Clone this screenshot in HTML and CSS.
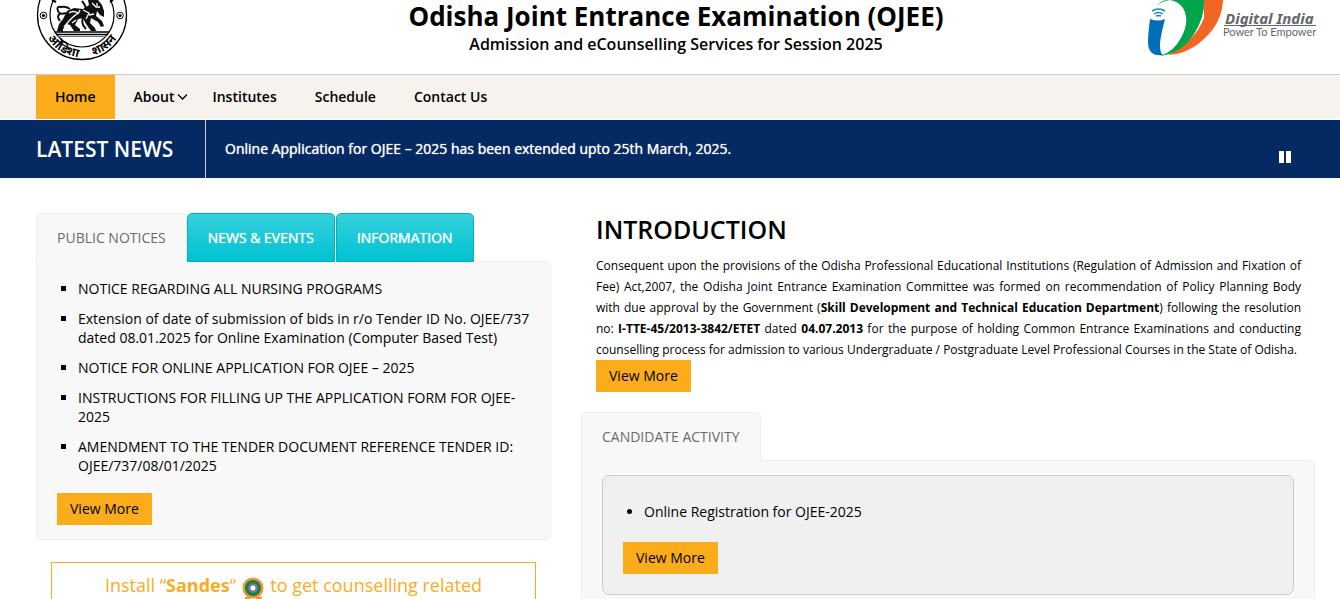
FILE: index.html
```html
<!DOCTYPE html>
<html lang="en">
<head>
<meta charset="utf-8">
<title>Odisha Joint Entrance Examination (OJEE)</title>
<link rel="stylesheet" href="styles.css">
</head>
<body>
<header class="masthead">
  <svg class="emblem" viewBox="0 0 92 62" role="img" aria-label="Government of Odisha emblem">
    <circle cx="46" cy="15" r="44.5" fill="#fff" stroke="#000" stroke-width="1.3"/>
    <circle cx="46" cy="15" r="32" fill="#fff" stroke="#000" stroke-width="1.2"/>
    <g fill="none" stroke="#000"><circle cx="7.500" cy="15.500" r="3.300"/><circle cx="84" cy="15.500" r="3.300"/></g>
    <circle cx="7.500" cy="15.500" r="1.600"/><circle cx="84" cy="15.500" r="1.600"/>
    <path d="M19 32h54M20 34.500h52" stroke="#000" stroke-width="1.500"/>
    <path d="M22 36.500h48" stroke="#777"/>
    <path d="M21 31L23 24L27 19L31 11L38 8L47 9L53 5L52 0H62L66 5L68 11L68 17L64 15L61 11L60 16L66 21L68 26L65 27L62 22L55 18L54 23L59 28L60 31H55L50 24L47 18L42 19L39 25L44 29V31H38L34 25L31 24L27 29V32Z" fill="#111"/>
    <path d="M30 13Q23 15 22 11Q20 6 25 7Q30 6 34 9M24 14Q20 16 24 21M46 1Q52 8 49 14Q43 22 50 29" fill="none" stroke="#111" stroke-width="2"/>
    <path d="M33 13Q37 10 42 13L37 17L33 21L28 27M47 10L53 13L50 19M56 3L60 7L64 7M53 15L58 14M44 10L42 14M61 3v3M40 20L36 23" fill="none" stroke="#fff" stroke-width="1.300"/>
    <path d="M16 0l4 2M74 2l3-2" stroke="#000" stroke-width="2"/>
    <path id="seal-arc" d="M4 15A42 42 0 0 0 88 15" fill="none"/>
    <text class="seal-text"><textPath href="#seal-arc" startOffset="50%" text-anchor="middle">ओडिशा &#160;&#160;&#160; शासन</textPath></text>
  </svg>
  <div class="site-title">
    <h1>Odisha Joint Entrance Examination (OJEE)</h1>
    <p>Admission and eCounselling Services for Session 2025</p>
  </div>
  <svg class="digital-india" viewBox="0 0 168 62" role="img" aria-label="Digital India, Power To Empower">
    <path d="M56 0H75Q74 22 57 38Q45 50 29 54L20 55Q47 41 56 18Z" fill="#f26522"/>
    <path d="M8 6Q13 1 18 0H56Q57 17 46 34Q34 53 12 56Q27 51 34 36Q42 20 35 8Q30 1 22 0Q14 1 8 6Z" fill="#00a44b"/>
    <path d="M2 19Q10 22 17 19Q12 38 12 45Q12 53 15 55Q0 57 0 42Q0 34 2 19Z" fill="#006fba"/>
    <g fill="none" stroke="#1684c7" stroke-width="1.500"><path d="M4 11Q10.500 7 17 11M6 14Q10.500 11 15 14"/><path d="M8 16Q10.500 15 13 16"/></g>
    <text class="di-name" x="77" y="24">Digital India</text>
    <path d="M76 25.500h92" stroke="#63676b"/>
    <text class="di-tag" x="75" y="36">Power To Empower</text>
  </svg>
</header>

<nav class="main-nav" aria-label="Main">
  <a class="current" href="#home">Home</a>
  <a class="has-menu" href="#about">About<svg viewBox="0 0 13 10" aria-hidden="true"><path d="M4 2.500L8.500 7L13 2.500" fill="none" stroke="#000" stroke-width="1.300"/></svg></a>
  <a href="#institutes">Institutes</a>
  <a href="#schedule">Schedule</a>
  <a href="#contact">Contact Us</a>
</nav>

<section class="news-bar">
  <h2>LATEST NEWS</h2>
  <p>Online Application for OJEE – 2025 has been extended upto 25th March, 2025.</p>
  <button type="button" aria-label="Pause"><svg viewBox="0 0 12 12" aria-hidden="true"><path d="M0 0h5v12H0zM7 0h5v12H7z" fill="#fff"/></svg></button>
</section>

<main class="columns">
  <div class="left">
    <div class="tabs" role="tablist">
      <button type="button" class="tab active" role="tab" aria-selected="true">PUBLIC NOTICES</button>
      <button type="button" class="tab" role="tab" aria-selected="false">NEWS &amp; EVENTS</button>
      <button type="button" class="tab" role="tab" aria-selected="false">INFORMATION</button>
    </div>
    <section class="panel notices">
      <ul>
        <li><a href="#n1">NOTICE REGARDING ALL NURSING PROGRAMS</a></li>
        <li><a href="#n2">Extension of date of submission of bids in r/o Tender ID No. OJEE/737 dated 08.01.2025 for Online Examination (Computer Based Test)</a></li>
        <li><a href="#n3">NOTICE FOR ONLINE APPLICATION FOR OJEE – 2025</a></li>
        <li><a href="#n4">INSTRUCTIONS FOR FILLING UP THE APPLICATION FORM FOR OJEE-2025</a></li>
        <li><a href="#n5">AMENDMENT TO THE TENDER DOCUMENT REFERENCE TENDER ID: OJEE/737/08/01/2025</a></li>
      </ul>
      <a class="more" href="#notices">View More</a>
    </section>
    <aside class="sandes">
      <p>Install “<b>Sandes</b>“
        <svg viewBox="0 0 22 24" aria-hidden="true"><circle cx="11" cy="11" r="10.500" fill="#f0953c"/><path d="M14 19l6 1l-1 4h-5zM8 20l-5 0v4h5z" fill="#f0953c"/><circle cx="11" cy="11" r="8" fill="#17813f"/><circle cx="11" cy="11" r="4.800" fill="#7d77ab"/><circle cx="11" cy="11" r="2.500" fill="#fff"/></svg>
        to get counselling related</p>
    </aside>
  </div>

  <div class="right">
    <section class="intro">
      <h2>INTRODUCTION</h2>
      <p>Consequent upon the provisions of the Odisha Professional Educational Institutions (Regulation of Admission and Fixation of Fee) Act,2007, the Odisha Joint Entrance Examination Committee was formed on recommendation of Policy Planning Body with due approval by the Government (<b>Skill Development and Technical Education Department</b>) following the resolution no: <b>I-TTE-45/2013-3842/ETET</b> dated <b>04.07.2013</b> for the purpose of holding Common Entrance Examinations and conducting counselling process for admission to various Undergraduate / Postgraduate Level Professional Courses in the State of Odisha.</p>
      <a class="more" href="#introduction">View More</a>
    </section>
    <div class="tabs" role="tablist">
      <button type="button" class="tab active" role="tab" aria-selected="true">CANDIDATE ACTIVITY</button>
    </div>
    <section class="panel activity">
      <div class="card">
        <ul><li><a href="#register">Online Registration for OJEE-2025</a></li></ul>
        <a class="more" href="#activity">View More</a>
      </div>
    </section>
  </div>
</main>
</body>
</html>
```

FILE: styles.css
```css
* { box-sizing: border-box; }
body {
  margin: 0;
  height: 100vh;
  overflow: hidden;
  background: #fff;
  color: #000;
  font: 14px/19px "Open Sans", "Noto Sans", sans-serif;
}
h1, h2, p, ul { margin: 0; padding: 0; }
a { color: inherit; text-decoration: none; }
button { font: inherit; cursor: pointer; }

.masthead {
  display: grid;
  grid-template-columns: 1fr auto 1fr;
  padding: 0 24px 12px 36px;
}
.emblem { width: 92px; height: 62px; }
.seal-text { font: 700 12px "Noto Sans", sans-serif; }
.site-title { text-align: center; }
.site-title h1 { font-size: 26px; line-height: 32px; font-weight: 700; }
.site-title p { font-size: 16px; line-height: 24px; font-weight: 600; }
.digital-india { width: 168px; height: 62px; justify-self: end; overflow: visible; }
.di-name { font: italic 700 15px "Noto Sans", sans-serif; fill: #63676b; }
.di-tag { font: 400 11px "Lato", sans-serif; fill: #63676b; }

.main-nav {
  display: flex;
  padding-left: 36px;
  border-top: 1px solid #ccc;
  border-bottom: 1px solid #fff;
  background: #f6f2ed;
  font-weight: 600;
}
.main-nav a { padding: 0 19px; line-height: 44px; }
.main-nav .current { background: #fbac1b; }
.main-nav .has-menu { display: flex; align-items: center; padding-right: 6px; }
.main-nav svg { width: 13px; height: 10px; }

.news-bar {
  display: flex;
  align-items: center;
  padding: 0 49px 0 36px;
  background: #052963;
  color: #fff;
}
.news-bar h2 {
  width: 170px;
  border-right: 1px solid #c3cad8;
  font-size: 21px;
  line-height: 58px;
  font-weight: 600;
}
.news-bar p {
  flex: 1;
  padding: 0 0 2px 19px;
  text-shadow: 0 0 1px #fff;
}
.news-bar button {
  display: flex;
  padding: 16px 0 0;
  border: 0;
  background: none;
}
.news-bar svg { width: 12px; height: 12px; }

.columns {
  display: grid;
  grid-template-columns: 515fr 734fr;
  gap: 30px;
  padding: 35px 25px 0 36px;
}
.tabs { display: flex; }
.tab {
  position: relative;
  height: 49px;
  padding: 0 20px;
  border: 1px solid #00b0bd;
  border-radius: 5px 5px 0 0;
  background: linear-gradient(#35d0dc, #00c2d1);
  color: #fff;
  text-shadow: 0 0 1px #fff;
}
.tab + .tab + .tab { margin-left: 1px; }
.tab.active {
  border-color: #eee;
  border-bottom-color: #f8f8f8;
  background: #f8f8f8;
  color: #6b6b6b;
  text-shadow: none;
}
.panel {
  margin-top: -1px;
  border: 1px solid #eee;
  border-radius: 0 5px 5px 5px;
  background: #f8f8f8;
}
.notices { padding: 17px 20px 14px; }
.notices ul { padding: 0 0 7px 21px; list-style: square; }
.notices li { margin-bottom: 11px; }
.more {
  display: table;
  padding: 0 13px;
  background: #fbac1b;
  line-height: 32px;
}

.sandes {
  margin: 22px 15px 0;
  padding: 7px 20px 40px;
  border: 1px solid #fbac1b;
  color: #fbac1b;
  text-align: center;
  font-size: 18px;
  line-height: 30px;
}
.sandes svg { width: 22px; height: 24px; margin: 0 2px 0 1px; vertical-align: -9px; }

.intro { padding: 0 14px 20px 15px; }
.intro h2 { font-size: 25px; line-height: 33px; font-weight: 600; }
.intro p {
  margin-top: 9px;
  font-size: 12px;
  line-height: 21px;
  text-align: justify;
}
.activity { padding: 14px 20px 20px; }
.card {
  padding: 26px 20px 20px;
  border: 1px solid #ccc;
  border-radius: 7px;
  background: #f0f0f0;
}
.card ul { padding-left: 21px; }
.card li { margin-bottom: 21px; }
```
